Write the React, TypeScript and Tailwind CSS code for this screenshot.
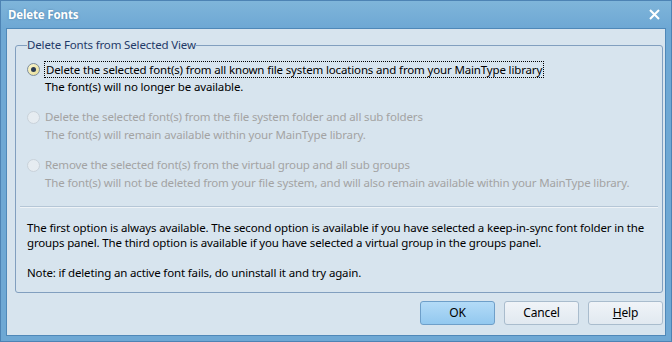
import React from "react";

const font = { fontFamily: "'Noto Sans', 'Open Sans', sans-serif", letterSpacing: "-0.15px" };

interface OptionProps {
  label: string;
  note: string;
  checked?: boolean;
  disabled?: boolean;
}

const Option: React.FC<OptionProps> = ({ label, note, checked, disabled }) => {
  return (
    <div className="flex flex-col whitespace-nowrap">
      <div className="flex items-center h-[18px]">
        {checked ? (
          <span className="w-[13px] h-[13px] rounded-full border border-[#7d8d9c] bg-gradient-to-br from-[#fbf6cf] to-[#e6dd97] flex items-center justify-center">
            <span className="w-[5px] h-[5px] rounded-full bg-[#2b3b55]" />
          </span>
        ) : (
          <span className="w-[13px] h-[13px] rounded-full border border-[#c9d2da] bg-[#e6ecf1]" />
        )}
        <span
          className={
            checked
              ? "ml-[4px] px-[1px] h-[17px] leading-[15px] border border-dotted border-black text-black"
              : "ml-[5px] leading-[18px] " + (disabled ? "text-[#a3a3a3]" : "text-black")
          }
        >
          {label}
        </span>
      </div>
      <div className={"pl-[18px] h-[18px] leading-[18px] " + (disabled ? "text-[#a3a3a3]" : "text-black")}>{note}</div>
    </div>
  );
};

const Button: React.FC<{ label: React.ReactNode; primary?: boolean }> = ({ label, primary }) => (
  <button
    className={
      "w-[75px] h-[24px] rounded-[3px] border text-[12px] text-black " +
      (primary
        ? "border-[#6e9fc9] bg-gradient-to-b from-[#b3dbf7] to-[#92c8ef]"
        : "border-[#a9bccd] bg-gradient-to-b from-[#f0f4f8] to-[#e1e9f0]")
    }
  >
    {label}
  </button>
);

export default function App() {
  return (
    <div className="w-[672px] h-[342px] bg-[#6ea8d4] border border-[#4d83b4] flex flex-col text-[11.5px]" style={font}>
      <div className="h-[27px] flex items-center justify-between pl-[7px] pr-[11px] bg-gradient-to-b from-[#7fb5da] to-[#6ea8d4]">
        <span className="font-bold text-white text-[11.5px] [text-shadow:0_0_2px_rgba(40,80,120,0.5)]">Delete Fonts</span>
        <svg width="11" height="11" viewBox="0 0 11 11">
          <path d="M1 1 L10 10 M10 1 L1 10" stroke="white" strokeWidth="2" />
        </svg>
      </div>
      <div className="flex-1 mx-[5px] mb-[5px] border border-[#4f88b8] bg-[#d7e4ee] flex flex-col pl-[8px] pr-[2px]">
        <fieldset className="mt-[9px] h-[255px] border border-[#819fbf] rounded-[3px] px-[11px] pt-[8px]">
          <legend className="text-[#1f3a68] leading-[14px]">Delete Fonts from Selected View</legend>
          <div className="flex flex-col gap-[12px]">
            <Option
              checked
              label="Delete the selected font(s) from all known file system locations and from your MainType library"
              note="The font(s) will no longer be available."
            />
            <Option
              disabled
              label="Delete the selected font(s) from the file system folder and all sub folders"
              note="The font(s) will remain available within your MainType library."
            />
            <Option
              disabled
              label="Remove the selected font(s) from the virtual group and all sub groups"
              note="The font(s) will not be deleted from your file system, and will also remain available within your MainType library."
            />
          </div>
          <div className="mt-[14px] h-[2px] bg-[#b5c6d6] border-b border-[#eef3f7] -mx-[7px]" />
          <div className="mt-[12px] text-black leading-[15px] whitespace-nowrap">
            <p>
              The first option is always available. The second option is available if you have selected a keep-in-sync font folder in the
              <br />
              groups panel. The third option is available if you have selected a virtual group in the groups panel.
            </p>
            <p className="mt-[15px]">Note: if deleting an active font fails, do uninstall it and try again.</p>
          </div>
        </fieldset>
        <div className="mt-[8px] flex justify-end gap-[9px]">
          <Button primary label="OK" />
          <Button label="Cancel" />
          <Button
            label={
              <span>
                <span className="underline">H</span>elp
              </span>
            }
          />
        </div>
      </div>
    </div>
  );
}
